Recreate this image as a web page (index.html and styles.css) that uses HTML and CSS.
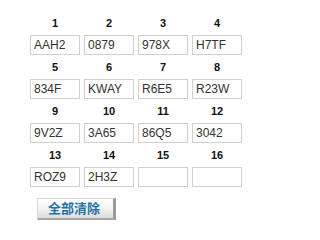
FILE: index.html
```html
<!DOCTYPE html>
<html>
<head>
<meta charset="utf-8">
<link rel="stylesheet" href="styles.css">
</head>
<body>
<div class="page">
  <div class="grid">
    <div class="cell"><div class="num">1</div><div class="box">AAH2</div></div>
    <div class="cell"><div class="num">2</div><div class="box">0879</div></div>
    <div class="cell"><div class="num">3</div><div class="box">978X</div></div>
    <div class="cell"><div class="num">4</div><div class="box">H7TF</div></div>
    <div class="cell"><div class="num">5</div><div class="box">834F</div></div>
    <div class="cell"><div class="num">6</div><div class="box">KWAY</div></div>
    <div class="cell"><div class="num">7</div><div class="box">R6E5</div></div>
    <div class="cell"><div class="num">8</div><div class="box">R23W</div></div>
    <div class="cell"><div class="num">9</div><div class="box">9V2Z</div></div>
    <div class="cell"><div class="num">10</div><div class="box">3A65</div></div>
    <div class="cell"><div class="num">11</div><div class="box">86Q5</div></div>
    <div class="cell"><div class="num">12</div><div class="box">3042</div></div>
    <div class="cell"><div class="num">13</div><div class="box">ROZ9</div></div>
    <div class="cell"><div class="num">14</div><div class="box">2H3Z</div></div>
    <div class="cell"><div class="num">15</div><div class="box"></div></div>
    <div class="cell"><div class="num">16</div><div class="box"></div></div>
  </div>
  <div class="actions"><button class="clear">全部清除</button></div>
</div>
</body>
</html>
```
FILE: styles.css
```css
html, body { margin: 0; padding: 0; background: #fff; }
.page {
  padding: 16px 0 0 30px;
  font-family: "Liberation Sans", Arial, sans-serif;
}
.grid {
  display: grid;
  grid-template-columns: repeat(4, 50px);
  column-gap: 4px;
  row-gap: 5px;
}
.cell { display: flex; flex-direction: column; }
.num {
  height: 14px;
  line-height: 14px;
  text-align: center;
  font-size: 11px;
  font-weight: bold;
  color: #111;
  margin-bottom: 5px;
}
.box {
  box-sizing: border-box;
  width: 50px;
  height: 20px;
  border: 1px solid #cfcfcf;
  padding: 0 0 0 3px;
  font-size: 12px;
  line-height: 18px;
  color: #333;
}
.actions { padding: 11px 0 0 7px; }
.clear {
  box-sizing: border-box;
  width: 79px;
  height: 22px;
  margin: 0;
  padding: 0 3px 2px 0;
  border: 1px solid #d8d8d8;
  border-right: 3px solid #9a9a9a;
  border-bottom: 2px solid #a8a8a8;
  background: linear-gradient(#ffffff, #f4f4f4 50%, #dcdcdc);
  font-family: "Noto Sans CJK SC", sans-serif;
  font-size: 13px;
  font-weight: bold;
  line-height: 18px;
  color: #1f72a6;
}
```
